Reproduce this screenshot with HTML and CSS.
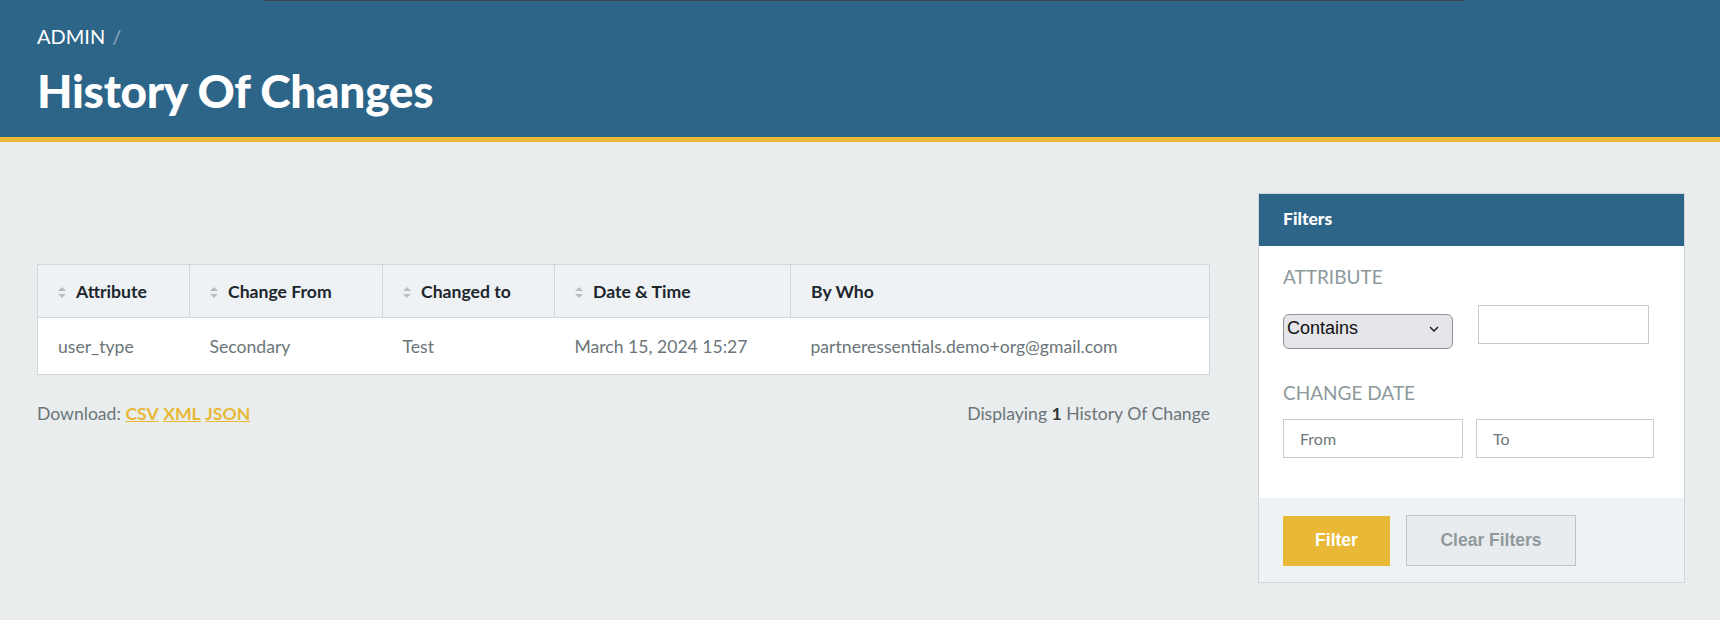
FILE: index.html
```html
<!DOCTYPE html>
<html lang="en">
<head>
    <meta charset="UTF-8">
    <meta name="viewport" content="width=device-width, initial-scale=1.0">
    <title>History Of Changes | Admin</title>
    <link rel="stylesheet" href="styles.css">
</head>
<body>
    <!-- Page title -->
    <header class="page-header">
        <div class="strip"><span class="strip-dark"></span></div>
        <div class="breadcrumb">
            <a href="#">ADMIN</a>
            <span class="sep">/</span>
        </div>
        <h1>History Of Changes</h1>
    </header>

    <div class="content">
        <!-- Table -->
        <main class="main">
            <table class="index-table">
                <thead>
                    <tr>
                        <th class="col-attr sortable"><span class="sort"><svg width="8" height="11" viewBox="0 0 8 11"><path d="M4 0L8 4H0z"/><path d="M4 11L0 7h8z"/></svg></span>Attribute</th>
                        <th class="col-from sortable"><span class="sort"><svg width="8" height="11" viewBox="0 0 8 11"><path d="M4 0L8 4H0z"/><path d="M4 11L0 7h8z"/></svg></span>Change From</th>
                        <th class="col-to sortable"><span class="sort"><svg width="8" height="11" viewBox="0 0 8 11"><path d="M4 0L8 4H0z"/><path d="M4 11L0 7h8z"/></svg></span>Changed to</th>
                        <th class="col-date sortable"><span class="sort"><svg width="8" height="11" viewBox="0 0 8 11"><path d="M4 0L8 4H0z"/><path d="M4 11L0 7h8z"/></svg></span>Date &amp; Time</th>
                        <th class="col-who">By Who</th>
                    </tr>
                </thead>
                <tbody>
                    <tr>
                        <td>user_type</td>
                        <td>Secondary</td>
                        <td>Test</td>
                        <td>March 15, 2024 15:27</td>
                        <td>partneressentials.demo+org@gmail.com</td>
                    </tr>
                </tbody>
            </table>
            <div class="table-footer">
                <div class="download">Download: <a href="#">CSV</a> <a href="#">XML</a> <a href="#">JSON</a></div>
                <div class="pagination-info">Displaying <b>1</b> History Of Change</div>
            </div>
        </main>

        <!-- Filters -->
        <aside class="sidebar">
            <div class="panel">
                <h3>Filters</h3>
                <form class="filter-form">
                    <div class="filter-body">
                        <div class="field">
                            <label>ATTRIBUTE</label>
                            <div class="field-row">
                                <span class="select-wrap">
                                    <select>
                                        <option>Contains</option>
                                        <option>Equals</option>
                                        <option>Starts with</option>
                                        <option>Ends with</option>
                                    </select>
                                    <svg class="chevron" width="10" height="6" viewBox="0 0 10 6"><path d="M1 1l4 4 4-4" fill="none" stroke="#222" stroke-width="1.5"/></svg>
                                </span>
                                <input type="text" class="text-input">
                            </div>
                        </div>
                        <div class="field">
                            <label>CHANGE DATE</label>
                            <div class="field-row dates">
                                <input type="text" class="date-input" placeholder="From">
                                <input type="text" class="date-input" placeholder="To">
                            </div>
                        </div>
                    </div>
                    <div class="buttons">
                        <button type="button" class="btn-filter">Filter</button>
                        <button type="button" class="btn-clear">Clear Filters</button>
                    </div>
                </form>
            </div>
        </aside>
    </div>
</body>
</html>
```

FILE: styles.css
```css
body {
    margin: 0;
    font-family: 'Lato', 'Source Sans Pro', sans-serif;
    background-color: #e9edee;
    color: #6b7579;
}

/* Шапка */
.page-header {
    background: #2d6589;
    border-bottom: 5px solid #e8b836;
    padding: 0 37px;
    box-sizing: border-box;
    height: 142px;
}

.strip {
    height: 1px;
    margin: 0 -37px;
    display: flex;
}

.strip-dark {
    display: block;
    margin-left: 263px;
    width: 1201px;
    background: #3b434c;
}

.breadcrumb {
    margin-top: 20px;
    line-height: 30px;
    font-size: 20px;
    color: #fff;
}

.breadcrumb a {
    color: #fff;
    text-decoration: none;
}

.breadcrumb .sep {
    color: #8fa9bd;
    margin-left: 2px;
}

.page-header h1 {
    margin: 12px 0 0;
    font-size: 46px;
    line-height: 56px;
    color: #fff;
    font-weight: 900;
    letter-spacing: -0.3px;
}

/* Контент */
.content {
    display: flex;
    gap: 48px;
    padding: 51px 35px 0 37px;
}

.main {
    flex: 1;
    padding-top: 71px;
}

.index-table {
    width: 100%;
    border-collapse: collapse;
    background: #fff;
    border: 1px solid #d0d6da;
    font-size: 17.6px;
}

.index-table th {
    background: #eef2f5;
    color: #1d262c;
    font-weight: 700;
    font-size: 17.6px;
    text-align: left;
    height: 52px;
    padding: 0 20px;
    border-right: 1px solid #d0d6da;
    border-bottom: 1px solid #d0d6da;
    white-space: nowrap;
}

.index-table th:last-child {
    border-right: none;
}

.index-table td {
    height: 55px;
    padding: 1px 20px 0;
    color: #6b7579;
    white-space: nowrap;
}

.col-attr { width: 111px; }
.col-from { width: 152px; }
.col-to { width: 131px; }
.col-date { width: 195px; }

.sort {
    display: inline-block;
    width: 8px;
    margin-right: 10px;
    vertical-align: 0;
}

.sort svg {
    fill: #b7bfc3;
    display: block;
}

.table-footer {
    display: flex;
    justify-content: space-between;
    margin-top: 26px;
    font-size: 17.6px;
    line-height: 26px;
}

.download a {
    color: #e8b836;
    font-weight: 700;
    text-decoration: underline;
}

.pagination-info b {
    color: #333;
}

/* Фильтры */
.sidebar {
    width: 427px;
}

.panel {
    border: 1px solid #cfd5d9;
    background: #fff;
}

.panel h3 {
    margin: 0;
    background: #2d6589;
    color: #fff;
    font-size: 17.5px;
    font-weight: 900;
    height: 52px;
    line-height: 50px;
    padding: 0 24px;
}

.filter-body {
    padding: 18px 24px 40px;
}

.field label {
    display: block;
    font-size: 19px;
    color: #8d999c;
    line-height: 26px;
}

.field-row {
    display: flex;
    align-items: flex-start;
    gap: 25px;
    margin-top: 15px;
}

.field + .field {
    margin-top: 31px;
}

.select-wrap {
    position: relative;
    display: inline-block;
    margin-top: 9px;
}

.select-wrap select {
    appearance: none;
    -webkit-appearance: none;
    width: 170px;
    height: 35px;
    background: #e6e5ea;
    border: 1px solid #8f8f94;
    border-radius: 6px;
    font-family: 'Liberation Sans', Arial, sans-serif;
    font-size: 18px;
    color: #111;
    padding: 0 3px 7px;
}

.select-wrap .chevron {
    position: absolute;
    right: 14px;
    top: 12px;
    pointer-events: none;
}

.text-input {
    width: 171px;
    height: 39px;
    box-sizing: border-box;
    border: 1px solid #c6ccd1;
    margin: 0;
}

.dates {
    gap: 13px;
    margin-top: 13px;
}

.date-input {
    width: 180px;
    height: 39px;
    box-sizing: border-box;
    border: 1px solid #c6ccd1;
    padding: 0 16px;
    font-family: 'Lato', sans-serif;
    font-size: 16px;
    margin: 0;
}

.date-input + .date-input {
    width: 178px;
}

.date-input::placeholder {
    color: #6f777b;
}

.buttons {
    background: #eef2f5;
    padding: 17px 24px 16px;
    display: flex;
    gap: 16px;
    align-items: center;
}

.btn-filter,
.btn-clear {
    font-family: 'Liberation Sans', Arial, sans-serif;
    font-size: 17.5px;
    font-weight: 700;
    cursor: pointer;
}

.btn-filter {
    width: 107px;
    height: 50px;
    background: #e8b836;
    color: #fff;
    border: none;
}

.btn-clear {
    width: 170px;
    height: 51px;
    background: #e8ecee;
    color: #8f9a9c;
    border: 1px solid #bfc4c7;
}
```
